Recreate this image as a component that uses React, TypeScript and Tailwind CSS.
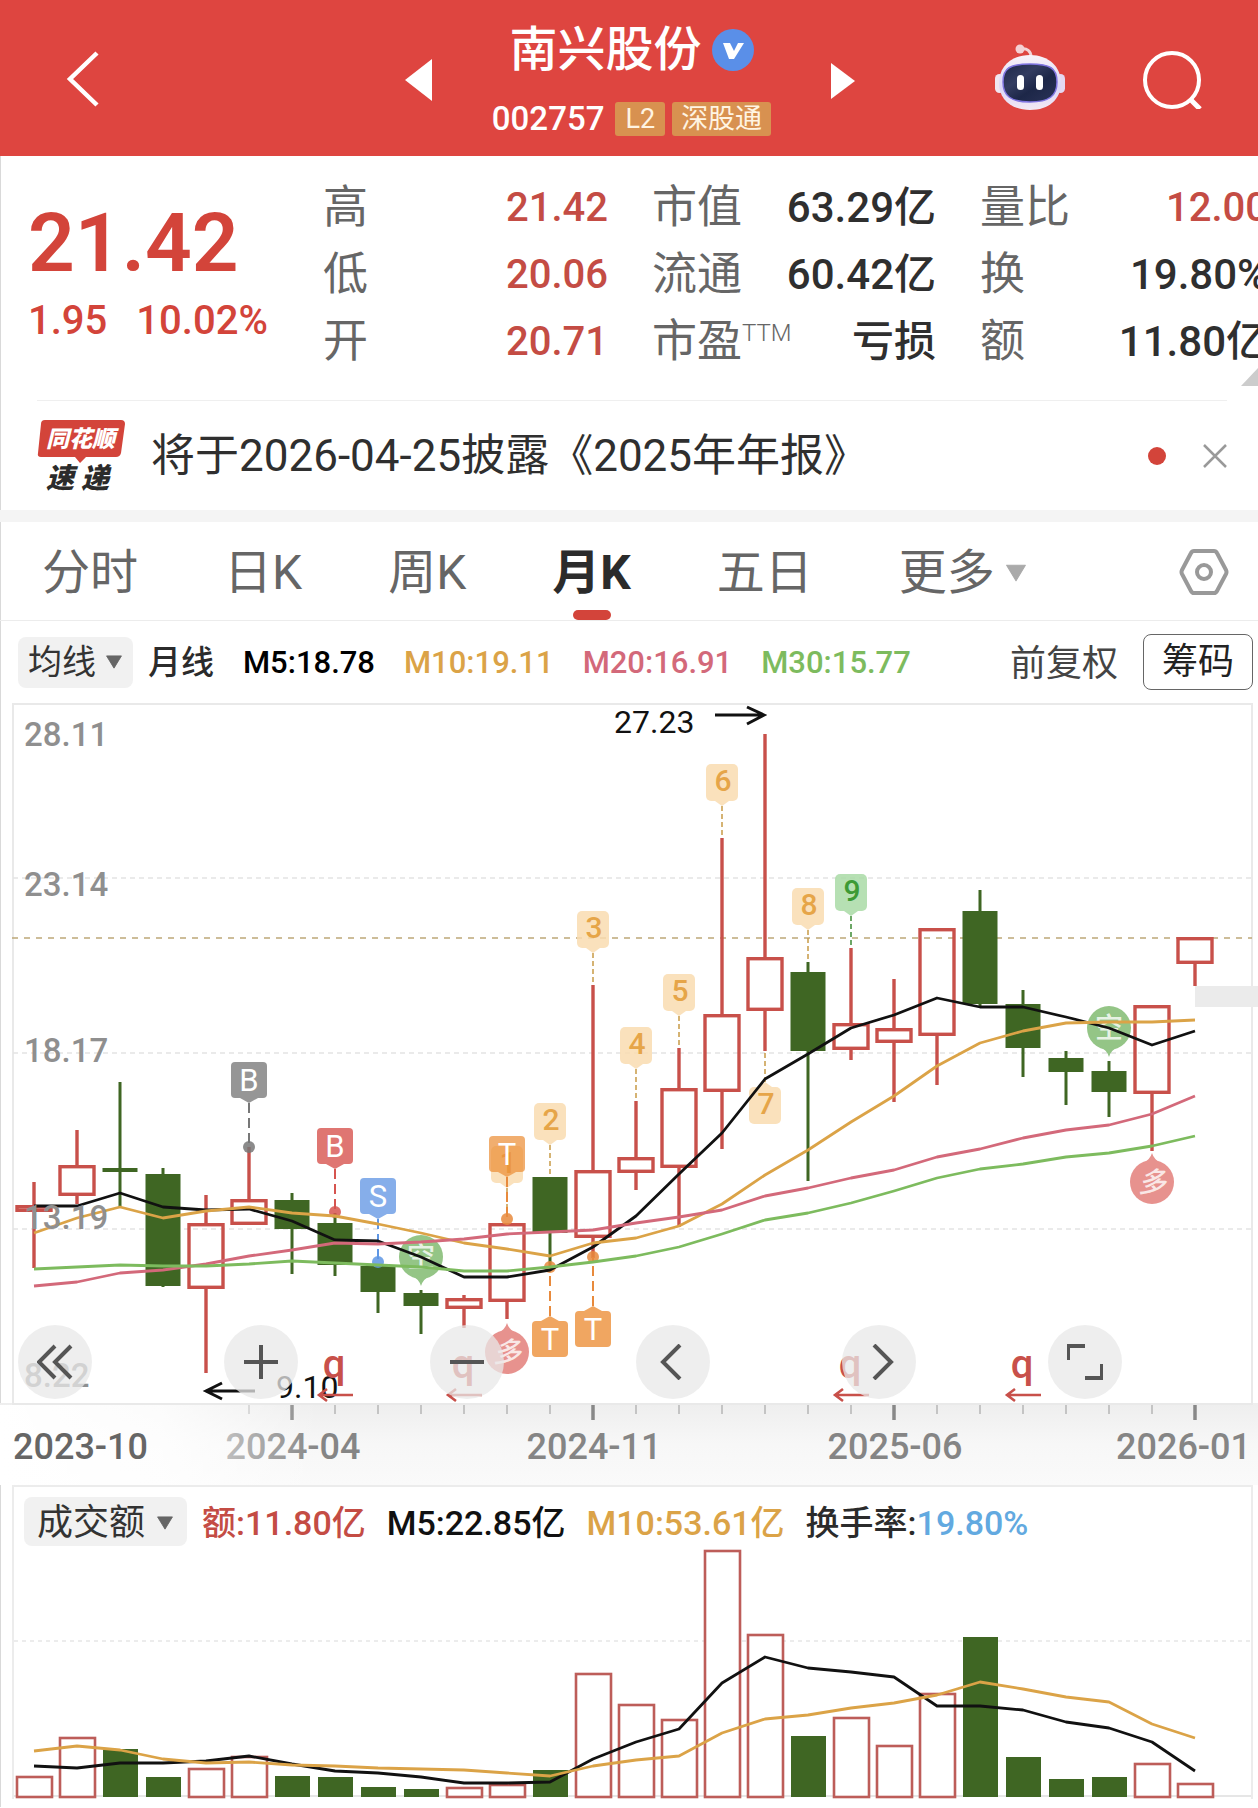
import type { ReactNode } from 'react'

// Monthly K-line page of a single stock: quote header, period tabs, candles, turnover.

type Candle = { high: number; top: number; bottom: number; low: number; up: boolean }
type Row = { label: string; sup?: string; value: string; red?: boolean }

const RED = '#c8504a'
const GREEN = '#3f6623'
const AMBER = '#dba347'
const PINK = '#d3697a'
const LIME = '#7dbb5e'

const STEP = 43
const cx = (i: number) => 34 + i * STEP

const c = (high: number, top: number, bottom: number, low: number, up: boolean): Candle => ({ high, top, bottom, low, up })

const CANDLES: Candle[] = [
  c(1182, 1205, 1212, 1268, true),
  c(1130, 1165, 1196, 1204, true),
  c(1082, 1168, 1172, 1207, false),
  c(1168, 1174, 1286, 1287, false),
  c(1195, 1223, 1289, 1373, true),
  c(1147, 1199, 1225, 1225, true),
  c(1193, 1200, 1229, 1274, false),
  c(1213, 1223, 1265, 1276, false),
  c(1265, 1266, 1292, 1313, false),
  c(1290, 1293, 1306, 1334, false),
  c(1295, 1298, 1309, 1328, true),
  c(1223, 1223, 1302, 1319, true),
  c(1177, 1177, 1233, 1267, false),
  c(985, 1170, 1238, 1258, true),
  c(1101, 1157, 1173, 1190, true),
  c(1048, 1088, 1168, 1227, true),
  c(838, 1014, 1092, 1149, true),
  c(734, 957, 1011, 1051, true),
  c(962, 972, 1051, 1181, false),
  c(948, 1023, 1050, 1060, true),
  c(979, 1028, 1043, 1102, true),
  c(928, 928, 1036, 1085, true),
  c(890, 911, 1004, 1007, false),
  c(990, 1004, 1048, 1077, false),
  c(1051, 1058, 1072, 1105, false),
  c(1061, 1071, 1092, 1117, false),
  c(1005, 1005, 1094, 1151, true),
  c(937, 937, 964, 986, true),
]

const MA5 = [1206, 1206, 1193, 1207, 1210, 1209, 1221, 1240, 1241, 1257, 1277, 1277, 1270, 1247, 1216, 1174, 1133, 1079, 1054, 1028, 1015, 998, 1007, 1007, 1017, 1028, 1045, 1031]
const MA10 = [1233, 1218, 1207, 1218, 1211, 1207, 1213, 1216, 1224, 1233, 1243, 1249, 1256, 1243, 1238, 1226, 1204, 1175, 1150, 1122, 1096, 1066, 1043, 1031, 1023, 1022, 1022, 1020]
const MA20 = [1286, 1282, 1273, 1270, 1264, 1256, 1250, 1243, 1244, 1242, 1239, 1234, 1232, 1230, 1223, 1217, 1210, 1196, 1188, 1178, 1170, 1157, 1149, 1138, 1130, 1125, 1114, 1096]
const MA30 = [1269, 1267, 1265, 1266, 1266, 1264, 1261, 1263, 1265, 1267, 1271, 1271, 1267, 1262, 1256, 1247, 1234, 1220, 1213, 1203, 1191, 1178, 1169, 1164, 1157, 1153, 1146, 1136]

const VOLUME = [1776, 1737, 1749, 1777, 1768, 1756, 1776, 1777, 1787, 1789, 1787, 1784, 1770, 1673, 1704, 1719, 1550, 1634, 1736, 1717, 1745, 1693, 1637, 1757, 1779, 1777, 1763, 1783]
const VOL5 = [1766, 1768, 1763, 1763, 1761, 1756, 1764, 1771, 1773, 1777, 1783, 1783, 1782, 1759, 1742, 1729, 1683, 1657, 1668, 1672, 1677, 1706, 1706, 1710, 1722, 1728, 1742, 1771]
const VOL10 = [1751, 1746, 1750, 1759, 1763, 1762, 1765, 1766, 1768, 1769, 1770, 1773, 1776, 1766, 1760, 1756, 1733, 1719, 1715, 1708, 1703, 1695, 1682, 1689, 1697, 1702, 1724, 1738]
const VOL_BASE = 1796

const points = (ys: number[]) => ys.map((y, i) => `${cx(i)},${y}`).join(' ')

const PRICE_LABELS = [
  { text: '28.11', y: 746 },
  { text: '23.14', y: 896 },
  { text: '18.17', y: 1062 },
  { text: '13.19', y: 1229 },
  { text: '8.22', y: 1387 },
]

const DATES = [
  { text: '2024-04', i: 6 },
  { text: '2024-11', i: 13 },
  { text: '2025-06', i: 20 },
]

const QUOTE: Row[][] = [
  [
    { label: '高', value: '21.42', red: true },
    { label: '低', value: '20.06', red: true },
    { label: '开', value: '20.71', red: true },
  ],
  [
    { label: '市值', value: '63.29亿' },
    { label: '流通', value: '60.42亿' },
    { label: '市盈', sup: 'TTM', value: '亏损' },
  ],
  [
    { label: '量比', value: '12.00', red: true },
    { label: '换', value: '19.80%' },
    { label: '额', value: '11.80亿' },
  ],
]

const TABS = ['分时', '日K', '周K', '月K', '五日']

function Down({ className }: { className: string }) {
  return (
    <svg viewBox="0 0 20 16" className={className} aria-hidden="true">
      <path d="M1.5 1h17L10 15z" fill="currentColor" stroke="currentColor" strokeLinejoin="round" />
    </svg>
  )
}

function Robot() {
  return (
    <svg viewBox="0 0 72 68" className="h-[68px] w-[72px]" aria-hidden="true">
      <defs>
        <linearGradient id="shell" x1="0" y1="0" x2="0" y2="1">
          <stop offset="0" stopColor="#f8f3f8" />
          <stop offset="0.6" stopColor="#dcd6f6" />
          <stop offset="1" stopColor="#f3e9f4" />
        </linearGradient>
        <linearGradient id="visor" x1="0" y1="0" x2="1" y2="1">
          <stop offset="0" stopColor="#1d2748" />
          <stop offset="0.35" stopColor="#333c60" />
          <stop offset="0.6" stopColor="#1d2748" />
          <stop offset="1" stopColor="#2a3358" />
        </linearGradient>
      </defs>
      <path d="M27 5c6-1 10 2 10 8" fill="none" stroke="#f3d3d6" strokeWidth="3" />
      <circle cx="26" cy="5" r="4.5" fill="#f4d0d3" />
      <rect x="1" y="30" width="9" height="19" rx="4.5" fill="#f0e6f0" />
      <rect x="62" y="30" width="9" height="19" rx="4.5" fill="#e4d8f2" />
      <path d="M36 11c19 0 31 12 31 28S55 66 36 66 5 55 5 39s12-28 31-28z" fill="url(#shell)" />
      <path d="M36 20c20 0 27 4 27 18s-8 20-27 20-27-6-27-20 7-18 27-18z" fill="url(#visor)" stroke="#7f74e0" strokeWidth="1.5" />
      <rect x="23" y="31" width="7" height="15" rx="3.5" fill="#fff" />
      <rect x="42" y="31" width="7" height="15" rx="3.5" fill="#fff" />
    </svg>
  )
}

function Header() {
  return (
    <header className="grid grid-cols-[1fr_auto_1fr] items-center bg-[#de4540] py-[20px] text-white">
      <button aria-label="返回" className="ml-[64px] w-[36px]">
        <svg viewBox="0 0 36 58" className="h-[58px] w-[36px]" fill="none" stroke="currentColor" strokeWidth="4.5">
          <path d="M33 4 6 30l27 26" />
        </svg>
      </button>
      <div className="flex items-center gap-[60px] pl-[2px]">
        <button aria-label="上一只">
          <svg viewBox="0 0 27 46" className="h-[46px] w-[27px]"><path d="M27 4v42L0 25z" fill="currentColor" /></svg>
        </button>
        <div className="flex flex-col items-center">
          <h1 className="flex h-[60px] items-center gap-[10px] text-[48px] leading-[60px] font-medium">
            南兴股份
            <svg viewBox="0 0 42 42" className="h-[42px] w-[42px]" aria-hidden="true">
              <circle cx="21" cy="21" r="21" fill="#5a8fe8" />
              <path d="M11 14h7l4 8 4-8h6L22 30h-5z" fill="#fff" />
            </svg>
          </h1>
          <div className="mt-[22px] flex items-center gap-[7px] text-[27px] leading-[34px] text-[#fff4e2]">
            <span className="mr-[4px] text-[33px] font-medium text-white">002757</span>
            <span className="rounded-[3px] bg-[#d89150] px-[10px]">L2</span>
            <span className="rounded-[3px] bg-[#d89150] px-[9px]">深股通</span>
          </div>
        </div>
        <button aria-label="下一只">
          <svg viewBox="0 0 24 42" className="h-[42px] w-[24px]"><path d="M0 6v36l24-18z" fill="currentColor" /></svg>
        </button>
      </div>
      <div className="flex items-center justify-end gap-[76px] pr-[54px]">
        <button aria-label="智能助手"><Robot /></button>
        <button aria-label="搜索">
          <svg viewBox="0 0 62 62" className="h-[62px] w-[62px]" fill="none" stroke="currentColor" strokeWidth="4">
            <circle cx="30" cy="33" r="27" />
            <path d="m48 52 10 10" strokeWidth="5" />
          </svg>
        </button>
      </div>
    </header>
  )
}

function Quote() {
  return (
    <section className="relative">
      <div className="-mr-[10px] grid grid-cols-[251px_285px_284px_1fr] gap-x-[44px] pt-[18px] pb-[25px] pl-[28px]">
        <div className="text-[#d3443a]">
          <div className="mt-[27px] text-[82px] leading-[84px] font-semibold">21.42</div>
          <div className="mt-[8px] flex gap-[29px] text-[40px] leading-[56px] font-medium">
            <span>1.95</span>
            <span>10.02%</span>
          </div>
        </div>
        {QUOTE.map(col => (
          <dl key={col[0].label}>
            {col.map(r => (
              <div key={r.label} className="flex h-[67px] items-center justify-between">
                <dt className="text-[45px] text-[#666]">
                  {r.label}
                  {r.sup && <sup className="-top-[16px] text-[24px] font-light">{r.sup}</sup>}
                </dt>
                <dd className={`font-medium ${r.red ? 'text-[40px] text-[#c44c44]' : 'text-[42px] text-[#2f2f2f]'}`}>{r.value}</dd>
              </div>
            ))}
          </dl>
        ))}
      </div>
      <svg viewBox="0 0 17 18" className="absolute right-0 bottom-[14px] h-[18px] w-[17px]" aria-hidden="true">
        <path d="M17 0v18H0z" fill="#ccc" />
      </svg>
    </section>
  )
}

function Notice() {
  return (
    <section className="mr-[31px] ml-[37px] flex h-[110px] items-center border-t border-[#efefef]">
      <svg viewBox="0 0 88 74" className="h-[74px] w-[88px]" role="img" aria-label="同花顺速递">
        <path d="M8 1h76q4 0 4 4l-4 29q-1 4-5 4H49l-6 6-5-6H4q-4 0-3-4L4 5q0-4 4-4z" fill="#d3443a" />
        <text x="9" y="28" fontSize="23" fontWeight="900" fontStyle="italic" fill="#fff">同花顺</text>
        <text x="9" y="69" fontSize="28" fontWeight="900" fontStyle="italic" fill="#2b2b2b">速</text>
        <text x="44" y="69" fontSize="28" fontWeight="900" fontStyle="italic" fill="#2b2b2b">递</text>
      </svg>
      <a href="#report" className="ml-[26px] text-[44px] leading-[60px] text-[#2f2f2f]">将于2026-04-25披露《2025年年报》</a>
      <span className="ml-auto h-[18px] w-[18px] rounded-full bg-[#d3443a]" />
      <button aria-label="关闭" className="ml-[37px]">
        <svg viewBox="0 0 24 24" className="h-[24px] w-[24px]" stroke="#999" strokeWidth="2.5"><path d="m1 1 22 22M23 1 1 23" /></svg>
      </button>
    </section>
  )
}

function Tabs() {
  return (
    <nav className="flex h-[99px] items-stretch gap-[86px] border-b border-[#ececec] pt-[4px] pr-[29px] pl-[42px] text-[48px] text-[#666]">
      {TABS.map(t => (
        <button key={t} className={`relative ${t === '月K' ? 'font-bold text-[#2b2b2b]' : ''}`}>
          {t}
          {t === '月K' && <span className="absolute bottom-0 left-1/2 h-[10px] w-[38px] -translate-x-1/2 rounded-full bg-[#d3443a]" />}
        </button>
      ))}
      <button className="flex items-center gap-[10px]">
        更多
        <Down className="h-[18px] w-[22px] text-[#aaa]" />
      </button>
      <button aria-label="设置" className="ml-auto">
        <svg viewBox="0 0 50 48" className="h-[48px] w-[50px]" fill="none" stroke="#999" strokeWidth="4" strokeLinejoin="round">
          <path d="M15 2h20q2 0 3 2l9 17q1 2 0 4l-9 17q-1 2-3 2H15q-2 0-3-2L3 25q-1-2 0-4l9-17q1-2 3-2z" />
          <circle cx="25" cy="23" r="7" />
        </svg>
      </button>
    </nav>
  )
}

function Averages() {
  return (
    <div className="flex h-[82px] items-center pr-[5px] pl-[18px] text-[31px] font-medium">
      <button className="flex h-[51px] items-center gap-[9px] rounded-lg bg-[#f1f1f1] px-[10px] text-[34px] font-normal text-[#333]">
        均线
        <Down className="h-[14px] w-[18px] text-[#666]" />
      </button>
      <span className="ml-[15px] pt-[2px] text-[33px] text-[#2b2b2b]">月线</span>
      <span className="ml-[29px] pt-[2px] text-black">M5:18.78</span>
      <span className="ml-[29px] pt-[2px] text-[#dba347]">M10:19.11</span>
      <span className="ml-[29px] pt-[2px] text-[#d3697a]">M20:16.91</span>
      <span className="ml-[29px] pt-[2px] text-[#7dbb5e]">M30:15.77</span>
      <button className="ml-auto pt-[4px] text-[36px] font-normal text-[#444]">前复权</button>
      <button className="ml-[25px] h-[56px] rounded-lg border border-[#666] px-[18px] text-[36px] leading-[54px] font-normal text-[#222]">筹码</button>
    </div>
  )
}

// Numbered sequence tag, its tip points at the candle.
function SeqTag({ i, n, tip, end, green, below }: { i: number; n: string; tip: number; end: number; green?: boolean; below?: boolean }) {
  const x = cx(i)
  const s = below ? -1 : 1
  const color = green ? '#3d9a35' : '#e6a548'
  return (
    <g>
      <path d={`M${x} ${tip}V${end}`} stroke={green ? '#3d8a35' : '#c79a45'} strokeWidth="1.5" strokeDasharray="5 3" />
      <g fill={green ? '#a9dba6' : '#f9dcb0'} fillOpacity="0.85">
        <rect x={x - 16} y={below ? tip + 5 : tip - 42} width="32" height="37" rx="5" />
        <path d={`M${x - 7} ${tip - 5 * s}h14L${x} ${tip}z`} />
      </g>
      <text x={x + 1} y={below ? tip + 32 : tip - 15} fontSize="30" fontWeight="500" fill={color} textAnchor="middle">{n}</text>
    </g>
  )
}

// Buy / sell / T marker joined to a dot by a dashed line.
function Marker({ i, t, tip, dot, color, line, below }: { i: number; t: string; tip: number; dot: number; color: string; line: string; below?: boolean }) {
  const x = cx(i)
  const s = below ? -1 : 1
  return (
    <g>
      <path d={`M${x} ${tip}V${dot}`} stroke={line} strokeWidth="2" strokeDasharray="10 5" />
      <circle cx={x} cy={dot} r="6" fill={line} fillOpacity="0.85" />
      <rect x={x - 18} y={below ? tip + 5 : tip - 41} width="36" height="36" rx="4" fill={color} />
      <path d={`M${x - 9} ${tip - 5 * s}h18L${x} ${tip}z`} fill={color} />
      <text x={x} y={below ? tip + 34 : tip - 12} fontSize="31" fill="#fff" textAnchor="middle">{t}</text>
    </g>
  )
}

function Bubble({ i, y, t, color, up }: { i: number; y: number; t: string; color: string; up?: boolean }) {
  const x = cx(i)
  const s = up ? -1 : 1
  return (
    <g opacity="0.85">
      <circle cx={x} cy={y} r="22" fill={color} />
      <path d={`M${x - 10} ${y + 18 * s}Q${x - 2} ${y + 22 * s} ${x} ${y + 29 * s}Q${x + 2} ${y + 22 * s} ${x + 10} ${y + 18 * s}z`} fill={color} />
      <text x={x} y={y + 10} fontSize="28" fontWeight="500" fontStyle={up ? 'italic' : 'normal'} fill="#fff" fillOpacity="0.8" textAnchor="middle">{t}</text>
    </g>
  )
}

function KLine() {
  return (
    <svg viewBox="0 703 1258 782" className="block h-auto w-full" role="img" aria-label="月K线图">
      <defs>
        <linearGradient id="axis" x1="0" y1="0" x2="0" y2="1">
          <stop offset="0" stopColor="#eee" />
          <stop offset="0.5" stopColor="#f7f7f7" />
          <stop offset="1" stopColor="#fafafa" />
        </linearGradient>
        <linearGradient id="fade" x1="0" y1="0" x2="1" y2="0">
          <stop offset="0" stopColor="#fff" />
          <stop offset="0.5" stopColor="#fff" stopOpacity="0.8" />
          <stop offset="1" stopColor="#fff" stopOpacity="0" />
        </linearGradient>
      </defs>

      <rect x="0" y="1403" width="1258" height="82" fill="url(#axis)" />
      <rect x="13" y="704" width="1239" height="700" fill="none" stroke="#e9e9e9" strokeWidth="2" />
      <path d="M13 878H1252M13 1053H1252M13 1229H1252" stroke="#e3e3e3" strokeWidth="1.5" strokeDasharray="5 4" />
      <path d="M12 938H1252" stroke="#bda878" strokeWidth="1.5" strokeDasharray="6 6" />
      <rect x="1195" y="986" width="63" height="21" fill="#ebebeb" />

      {CANDLES.map((k, i) => {
        const x = cx(i)
        if (!k.up) {
          return (
            <g key={i} fill={GREEN}>
              <rect x={x - 1.5} y={k.high} width="3" height={k.low - k.high} />
              <rect x={x - 17.5} y={k.top} width="35" height={k.bottom - k.top} />
            </g>
          )
        }
        return (
          <g key={i} stroke={RED} strokeWidth="3.4" fill="none">
            <path d={`M${x} ${k.high}V${k.top}M${x} ${k.bottom}V${k.low}`} />
            <rect x={x - 17} y={k.top + 1.7} width="34" height={k.bottom - k.top - 3.4} />
          </g>
        )
      })}

      <SeqTag i={11} n="1" tip={1188} end={1219} />
      <SeqTag i={12} n="2" tip={1145} end={1177} />
      <SeqTag i={13} n="3" tip={953} end={985} />
      <SeqTag i={14} n="4" tip={1069} end={1101} />
      <SeqTag i={15} n="5" tip={1016} end={1048} />
      <SeqTag i={16} n="6" tip={806} end={838} />
      <SeqTag i={17} n="7" tip={1082} end={1051} below />
      <SeqTag i={18} n="8" tip={930} end={962} />
      <SeqTag i={19} n="9" tip={916} end={948} green />

      <Marker i={5} t="B" tip={1103} dot={1147} color="#969696" line="#777" />
      <Marker i={7} t="B" tip={1169} dot={1212} color="#df7672" line="#d6544f" />
      <Marker i={8} t="S" tip={1219} dot={1262} color="#86aeea" line="#5e96e4" />
      <Marker i={11} t="T" tip={1177} dot={1219} color="#eb8f38b8" line="#e88a3c" />
      <Marker i={12} t="T" tip={1316} dot={1267} color="#f0a661" line="#e88a3c" below />
      <Marker i={13} t="T" tip={1306} dot={1257} color="#f0a661" line="#e88a3c" below />

      <Bubble i={9} y={1257} t="空" color="#82bb72" />
      <Bubble i={25} y={1028} t="空" color="#82bb72" />
      <Bubble i={11} y={1352} t="多" color="#e37f7b" up />
      <Bubble i={26} y={1182} t="多" color="#e37f7b" up />

      <g fill="none" strokeWidth="2.8" strokeLinejoin="round">
        <polyline points={points(MA5)} stroke="#111" />
        <polyline points={points(MA10)} stroke={AMBER} />
        <polyline points={points(MA20)} stroke={PINK} />
        <polyline points={points(MA30)} stroke={LIME} />
      </g>

      <g fill="#8f8f8f" fontSize="33" fontWeight="500">
        {PRICE_LABELS.map(l => <text key={l.text} x="24" y={l.y}>{l.text}</text>)}
      </g>

      <g fontSize="32" fill="#111">
        <text x="614" y="733">27.23</text>
        <text x="276" y="1398">9.10</text>
      </g>
      <path d="M715 715h48M747 707l17 8-17 9M255 1391h-48M222 1383l-16 8 16 8" fill="none" stroke="#111" strokeWidth="3" />

      {[7, 10, 19, 23].map(i => (
        <g key={i}>
          <text x={cx(i) - 1} y="1378" fontSize="40" fontWeight="500" fill={RED} textAnchor="middle">q</text>
          <path d={`M${cx(i) + 18} 1395h-34m8-6-8 6 8 6`} fill="none" stroke={RED} strokeWidth="2.6" />
        </g>
      ))}

      {CANDLES.map((_, i) => {
        if (i < 5) return null
        const major = i % 7 === 6
        return <path key={i} d={`M${cx(i)} 1405v${major ? 15 : 9}`} stroke={major ? '#888' : '#c4c4c4'} strokeWidth={major ? 3.5 : 2} />
      })}
      <g fontSize="36" fontWeight="500" fill="#858585">
        {DATES.map(d => <text key={d.text} x={cx(d.i) + 1} y="1459" textAnchor="middle">{d.text}</text>)}
        <text x="1251" y="1459" textAnchor="end">2026-01</text>
      </g>
      <rect x="0" y="1405" width="320" height="80" fill="url(#fade)" />
      <text x="13" y="1459" fontSize="36" fontWeight="500" fill="#666">2023-10</text>
    </svg>
  )
}

const CONTROLS: { label: string; icon: ReactNode }[] = [
  { label: '最早', icon: <path d="M18 2 2 18l16 16M34 2 18 18l16 16" /> },
  { label: '放大', icon: <path d="M18 1v34M1 18h34" /> },
  { label: '缩小', icon: <path d="M1 18h34" /> },
  { label: '左移', icon: <path d="M25 1 8 18l17 17" /> },
  { label: '右移', icon: <path d="m13 1 17 17-17 17" /> },
  { label: '全屏', icon: <path d="M1 16V2h17M35 20v14H18" /> },
]

function Controls() {
  return (
    <div className="absolute top-[622px] left-0 flex gap-[132px] pl-[18px]">
      {CONTROLS.map(b => (
        <button key={b.label} aria-label={b.label} className="flex h-[74px] w-[74px] items-center justify-center rounded-full bg-[#e8e8e8]/75">
          <svg viewBox="0 0 36 36" className="h-[36px] w-[36px]" fill="none" stroke="#555" strokeWidth="4">{b.icon}</svg>
        </button>
      ))}
    </div>
  )
}

function Turnover() {
  return (
    <section className="mr-[5px] ml-[12px] border-x-2 border-t-2 border-[#ececec]">
      <div className="flex h-[62px] items-center pt-[6px] pl-[10px] text-[34px] font-medium">
        <button className="flex h-[49px] items-center gap-[11px] rounded-lg bg-[#f1f1f1] px-[13px] pt-[3px] text-[36px] font-normal text-[#333]">
          成交额
          <Down className="h-[14px] w-[18px] text-[#666]" />
        </button>
        <span className="ml-[15px] pt-[4px] text-[#c44c44]">额:11.80亿</span>
        <span className="ml-[21px] pt-[4px] text-[#111]">M5:22.85亿</span>
        <span className="ml-[21px] pt-[4px] text-[#dba347]">M10:53.61亿</span>
        <span className="ml-[21px] pt-[4px] text-[#2b2b2b]">换手率:<b className="font-medium text-[#62a9e0]">19.80%</b></span>
      </div>
      <svg viewBox="14 1549 1237 250" className="block h-auto w-full" role="img" aria-label="成交额柱状图">
        <path d="M14 1641H1251" stroke="#e6e6e6" strokeWidth="1.5" strokeDasharray="4 4" />
        <path d={`M14 ${VOL_BASE}H1251`} stroke="#e6e6e6" strokeWidth="2" />
        {VOLUME.map((top, i) => {
          const h = VOL_BASE - top
          return CANDLES[i].up
            ? <rect key={i} x={cx(i) - 17} y={top + 1} width="35" height={h} fill="#fff" stroke="#bd5d59" strokeWidth="2.6" />
            : <rect key={i} x={cx(i) - 17} y={top} width="35" height={h + 1} fill={GREEN} />
        })}
        <g fill="none" strokeWidth="2.8" strokeLinejoin="round">
          <polyline points={points(VOL5)} stroke="#111" />
          <polyline points={points(VOL10)} stroke={AMBER} />
        </g>
      </svg>
    </section>
  )
}

export default function App() {
  return (
    <div className="overflow-x-hidden bg-white font-[Roboto,'Noto_Sans_CJK_SC',sans-serif]">
      <Header />
      <main className="pb-[8px] shadow-[inset_1px_0_0_#d9d9d9]">
        <Quote />
        <Notice />
        <div className="h-[12px] bg-[#f4f4f4]" />
        <Tabs />
        <Averages />
        <div className="relative">
          <KLine />
          <Controls />
        </div>
        <Turnover />
      </main>
    </div>
  )
}
